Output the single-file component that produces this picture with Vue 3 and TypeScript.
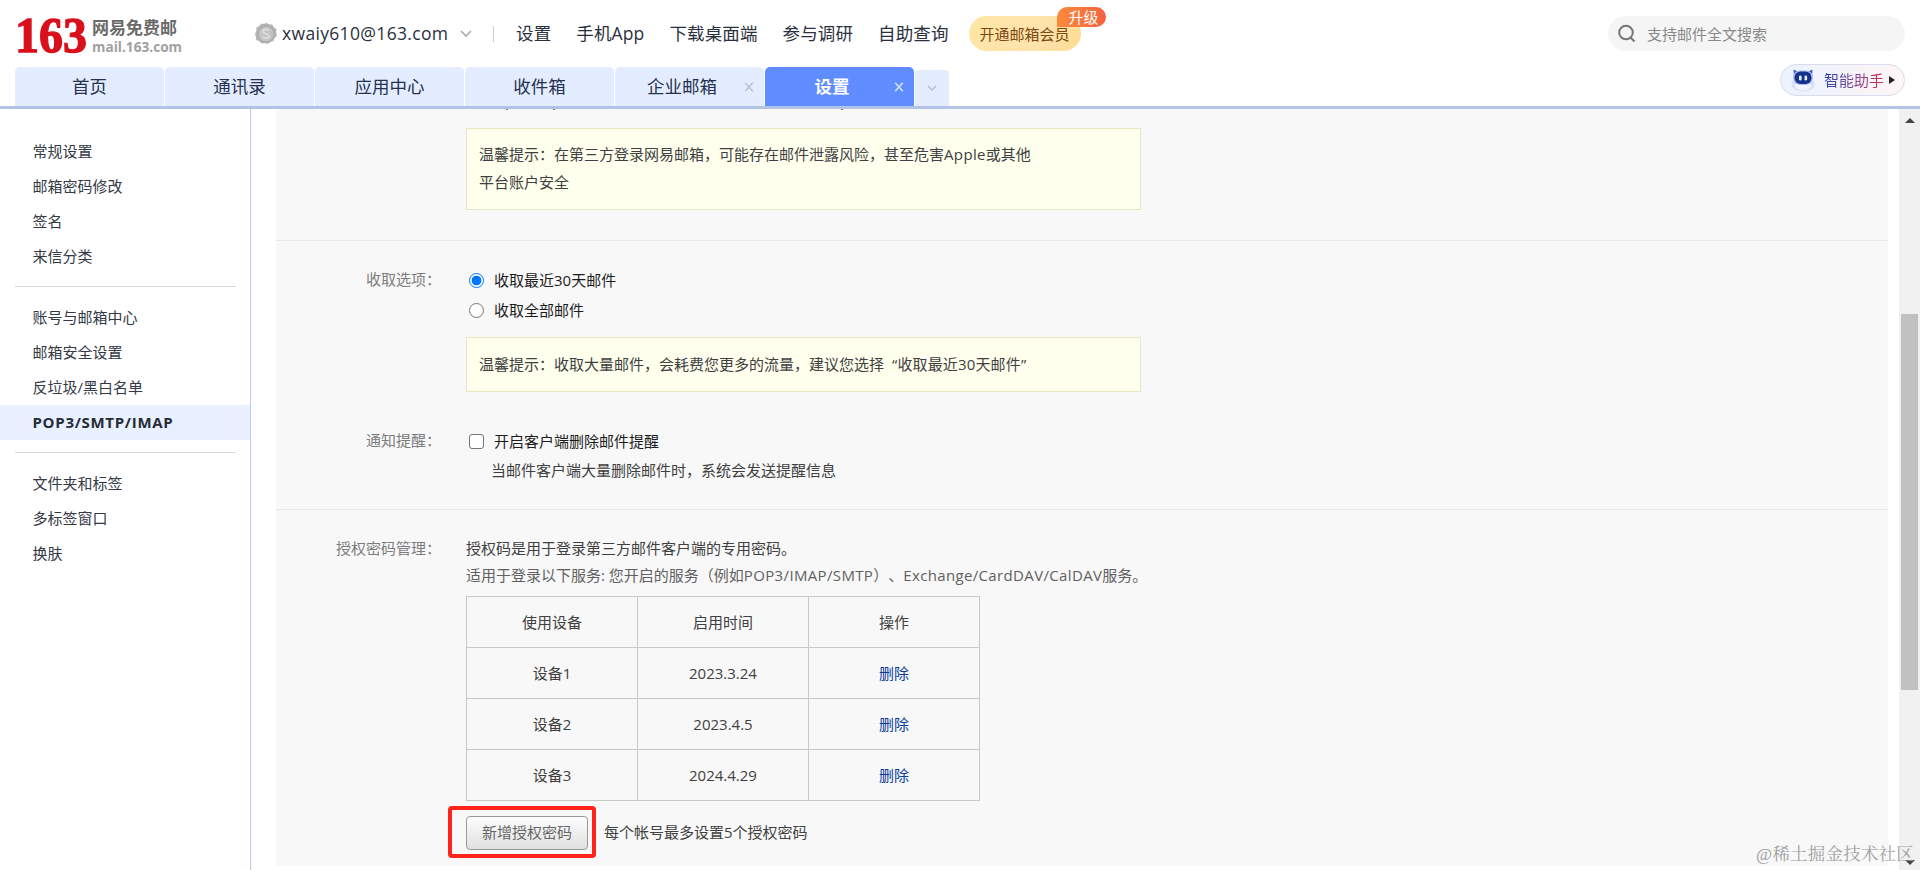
<script setup lang="ts">
interface Tab { label: string; closable?: boolean; active?: boolean }
interface Device { name: string; date: string }

const nav: string[] = ['设置', '手机App', '下载桌面端', '参与调研', '自助查询']
const tabs: Tab[] = [
  { label: '首页' },
  { label: '通讯录' },
  { label: '应用中心' },
  { label: '收件箱' },
  { label: '企业邮箱', closable: true },
  { label: '设置', closable: true, active: true },
]
const groups: string[][] = [
  ['常规设置', '邮箱密码修改', '签名', '来信分类'],
  ['账号与邮箱中心', '邮箱安全设置', '反垃圾/黑白名单', 'POP3/SMTP/IMAP'],
  ['文件夹和标签', '多标签窗口', '换肤'],
]
const current = 'POP3/SMTP/IMAP'
const devices: Device[] = [
  { name: '设备1', date: '2023.3.24' },
  { name: '设备2', date: '2023.4.5' },
  { name: '设备3', date: '2024.4.29' },
]
</script>

<template>
  <div class="page">
    <header class="top">
      <svg class="logo" width="172" height="54" viewBox="0 -10 172 54">
        <text class="logo-num" x="0" y="39" textLength="72" lengthAdjust="spacingAndGlyphs">163</text>
        <text class="logo-cn" x="77" y="21" textLength="85">网易免费邮</text>
        <text class="logo-en" x="77" y="39" textLength="90" lengthAdjust="spacingAndGlyphs">mail.163.com</text>
      </svg>
      <div class="account">
        <svg class="medal" width="24" height="24" viewBox="0 0 24 24">
          <path d="M12 .8l3 1.4 3.300.2 1.500 2.900 2.700 2-.4 3.200.9 3.200-2.400 2.300-1.100 3.100-3.200.8-2.500 2.100-3-1-3.200.6-2.200-2.400-3.100-1.200-.5-3.300L1 12l1.300-3.100.1-3.300 2.900-1.600L7.300 1.600l3.200.4z" fill="#b5b5b5" />
          <circle cx="12" cy="12" r="8" fill="#c4c4c4" stroke="#a5a5a5" />
          <path d="M15 8.500c-1.500-1.600-5.800-1.500-5.800 1 0 2.700 5.800 1.800 5.800 4.700 0 2.600-4.500 2.600-6.200.7" fill="none" stroke="#dedede" stroke-width="1.700" />
        </svg>
        <span class="mail">xwaiy610@163.com</span>
        <svg class="chev" width="12" height="8" viewBox="0 0 12 8"><path d="M1 1l5 5 5-5" fill="none" stroke="#aaa" stroke-width="1.600" /></svg>
      </div>
      <i class="sep"></i>
      <nav class="nav"><a v-for="n in nav" :key="n">{{ n }}</a></nav>
      <div class="vip">开通邮箱会员<span class="up">升级</span></div>
      <div class="search">
        <svg width="18" height="20" viewBox="0 0 18 20"><circle cx="8" cy="8.500" r="6.800" fill="none" stroke="#777" stroke-width="2" /><path d="M12.500 13.500l4 4" stroke="#777" stroke-width="2.200" /></svg>
        <span>支持邮件全文搜索</span>
      </div>
    </header>

    <div class="tabbar">
      <div v-for="t in tabs" :key="t.label" class="tab" :class="{ active: t.active, closable: t.closable }">
        {{ t.label }}
        <svg v-if="t.closable" class="x" width="10" height="10" viewBox="0 0 10 10"><path d="M1.200.8l7.600 8.400M8.800.8L1.200 9.200" stroke="currentColor" stroke-width="1.500" /></svg>
      </div>
      <div class="more"><svg width="10" height="7" viewBox="0 0 10 7"><path d="M1 1l4 4 4-4" fill="none" stroke="#b6bfd2" stroke-width="1.500" /></svg></div>
      <div class="assistant">
        <svg width="26" height="26" viewBox="0 0 26 26">
          <ellipse cx="13" cy="17.500" rx="11.500" ry="7" fill="#d8e0fb" />
          <ellipse cx="13" cy="18" rx="8" ry="5.500" fill="#f3f6ff" />
          <path d="M3.500 2.500l5 2.500-4.500 4zM22.500 2.500l-5 2.500 4.500 4z" fill="#3f57c8" />
          <rect x="3" y="3.500" width="20" height="14.500" rx="7.200" fill="#aebbf3" />
          <rect x="4.500" y="4.500" width="17" height="12.500" rx="6" fill="#17328c" />
          <rect x="9" y="8.500" width="2.600" height="5" rx="1.300" fill="#dff1ff" /><rect x="14.500" y="8.500" width="2.600" height="5" rx="1.300" fill="#dff1ff" />
        </svg>
        <span>智能助手</span><i></i>
      </div>
    </div>

    <div class="body">
      <aside class="side">
        <ul v-for="(g, i) in groups" :key="i">
          <li v-for="s in g" :key="s" :class="{ on: s === current }">{{ s }}</li>
        </ul>
      </aside>

      <main class="main">
        <section class="block first">
          <i class="tail t1"></i><i class="tail t2"></i><i class="tail t3"></i>
          <div class="tip">温馨提示：在第三方登录网易邮箱，可能存在邮件泄露风险，甚至危害<b>Apple</b>或其他<br />平台账户安全</div>
        </section>

        <section class="block receive">
          <div class="row">
            <div class="label">收取选项：</div>
            <div class="field">
              <div class="opt"><i class="radio sel"></i>收取最近30天邮件</div>
              <div class="opt"><i class="radio"></i>收取全部邮件</div>
              <div class="tip single">温馨提示：收取大量邮件，会耗费您更多的流量，建议您选择<span class="quoted">“收取最近30天邮件”</span></div>
            </div>
          </div>
          <div class="row notify">
            <div class="label">通知提醒：</div>
            <div class="field">
              <div class="opt"><i class="check"></i>开启客户端删除邮件提醒</div>
              <div class="note">当邮件客户端大量删除邮件时，系统会发送提醒信息</div>
            </div>
          </div>
        </section>

        <section class="block auth">
          <div class="row">
            <div class="label">授权密码管理：</div>
            <div class="field">
              <div class="desc">授权码是用于登录第三方邮件客户端的专用密码。</div>
              <div class="desc light">适用于登录以下服务: 您开启的服务（例如<b>POP3/IMAP/SMTP</b>）、<b>Exchange/CardDAV/CalDAV</b>服务。</div>
              <table>
                <thead><tr><th>使用设备</th><th>启用时间</th><th>操作</th></tr></thead>
                <tbody>
                  <tr v-for="d in devices" :key="d.name"><td>{{ d.name }}</td><td>{{ d.date }}</td><td><a>删除</a></td></tr>
                </tbody>
              </table>
              <div class="actions">
                <div class="btn-wrap"><button type="button">新增授权密码</button><span class="ring"></span></div>
                <span class="hint">每个帐号最多设置5个授权密码</span>
              </div>
            </div>
          </div>
        </section>
      </main>

      <div class="scroll"><i class="arrow up-arrow"></i><i class="thumb"></i><i class="arrow down-arrow"></i></div>
    </div>
    <div class="watermark">@稀土掘金技术社区</div>
  </div>
</template>

<style>
body { margin: 0; overflow: hidden; }
</style>

<style scoped>
* { box-sizing: border-box; }
.page { position: relative; width: 1920px; height: 870px; overflow: hidden; display: flex; flex-direction: column; background: #fff; color: #404040; font: 15px/28px "Open Sans", "Noto Sans CJK SC", sans-serif; white-space: nowrap; text-spacing-trim: space-all; }
.top { height: 67px; display: flex; flex: none; align-items: flex-start; padding: 16px 15px 0; font-size: 17.5px; line-height: 35px; color: #2b3040; }
.logo { display: block; flex: none; margin-top: -13px; }
.logo-num { font: bold 51px "Liberation Serif", serif; fill: #d9101c; stroke: #d9101c; stroke-width: 1.3px; }
.logo-cn { font: bold 17px "Noto Sans CJK SC", sans-serif; fill: #6a6a6a; }
.logo-en { font: bold 14px "Open Sans", sans-serif; fill: #a0a0a0; }
.account { width: 306px; padding-left: 67px; display: flex; align-items: center; height: 35px; }
.medal { margin-right: 4px; flex: none; }
.mail { width: 168px; letter-spacing: .33px; }
.chev { margin-left: 10px; }
.sep { width: 1px; height: 16px; margin-top: 10px; background: #ccc; }
.nav { display: flex; gap: 25px; margin-left: 22px; letter-spacing: .13px; }
.vip { position: relative; width: 112px; height: 35px; line-height: 36px; margin-left: 20px; border-radius: 18px; background: linear-gradient(110deg, #ffe6a4, #ffe3ad 60%, #fddc92); color: #7d4711; font-size: 15px; text-align: center; }
.up { position: absolute; left: 88px; top: -9px; width: 49px; height: 20px; padding-left: 5px; line-height: 20px; color: #fff; background: linear-gradient(90deg, #fb8b3c, #f4623f); border-radius: 10px 10px 10px 0; }
.search { margin-left: auto; width: 297px; height: 35px; line-height: 36px; border-radius: 18px; background: #f5f5f5; display: flex; align-items: center; padding-left: 10px; gap: 11px; color: #888; font-size: 15px; }
.tabbar { height: 42px; flex: none; display: flex; gap: 1px; padding-left: 15px; border-bottom: 3px solid #b2c3e5; align-items: flex-end; }
.tab { position: relative; width: 149px; height: 39px; line-height: 39px; text-align: center; font-size: 17.5px; color: #253150; background: #e4edff; border-radius: 5px 5px 0 0; }
.closable { padding-right: 15px; }
.active { background: #5f8dff; color: #fff; font-weight: bold; }
.x { position: absolute; right: 10px; top: 15px; color: #b7c1d8; }
.active .x { color: #dbe6ff; }
.more { width: 34px; height: 36px; background: #e4edff; border-radius: 4px 4px 0 0; display: flex; align-items: center; justify-content: center; }
.assistant { margin: 0 15px 10px auto; width: 125px; height: 32px; border: 1px solid #d9dcea; border-radius: 16px; background: linear-gradient(90deg, #eaf3ff, #fff5f5); display: flex; align-items: center; padding-left: 9px; }
.assistant span { margin-left: 8px; background: linear-gradient(90deg, #2b3fae, #7d4a9a 50%, #cf2e4c); background-clip: text; color: transparent; }
.assistant i { margin-left: 5px; border-left: 6px solid #222; border-top: 4px solid transparent; border-bottom: 4px solid transparent; }
.body { flex: 1; display: flex; min-height: 0; }
.side { width: 251px; border-right: 1px solid #bfcae6; padding-top: 25px; }
.side ul { list-style: none; margin: 0; padding: 0; }
.side ul:not(:last-child)::after { content: ''; display: block; height: 1px; margin: 12px 14px 13px 15px; background: #d6d9e0; }
.side li { height: 35px; line-height: 35px; padding-left: 32.5px; color: #343946; }
.side li.on { background: #e9f0ff; font-weight: bold; letter-spacing: .7px; color: #262b38; }
.main { margin-left: 25px; width: 1612px; height: 757px; background: #f8f8f8; overflow: hidden; }
.block { position: relative; border-bottom: 1px solid #e7e7e7; }
.block b { font-weight: normal; letter-spacing: .35px; }
.first { height: 132px; padding: 19px 0 0 190px; }
.tail { position: absolute; top: 0; width: 2px; height: 1px; background: #777; }
.t1 { left: 230px; } .t2 { left: 277px; } .t3 { left: 565px; }
.tip { width: 675px; height: 82px; padding: 11px 12px; border: 1px solid #e6e8c4; background: #ffffee; }
.single { height: 55px; margin-top: 12px; padding-top: 12px; }
.quoted { margin-left: 8px; letter-spacing: .15px; }
.receive { height: 269px; padding-top: 24px; }
.row { display: flex; }
.label { width: 165px; margin-right: 25px; text-align: right; color: #7c7c7c; }
.opt { height: 30px; line-height: 30px; color: #1c1c1c; display: flex; align-items: center; }
.radio, .check { width: 15px; height: 15px; margin: 0 10px 0 3px; border: 1px solid #767676; background: #fff; }
.radio { border-radius: 50%; }
.sel { border: 1.5px solid #0075ff; background: radial-gradient(circle, #0075ff 4.500px, #fff 5.200px); }
.check { border-radius: 3px; }
.notify { margin-top: 34px; }
.note { padding-left: 25px; line-height: 28px; }
.auth { border: 0; padding-top: 24px; }
.desc { height: 28px; line-height: 28px; }
.light { color: #606060; height: 34px; line-height: 26px; }
table { width: 514px; border-collapse: collapse; table-layout: fixed; }
th, td { height: 51px; padding: 0; border: 1px solid #c8c8c8; text-align: center; font-weight: normal; }
td a { color: #0a3d9c; }
.actions { display: flex; align-items: center; margin-top: 15px; gap: 16px; }
.hint { margin-top: -2px; }
.btn-wrap { position: relative; width: 122px; height: 34px; }
button { display: block; width: 122px; height: 34px; padding: 0 0 2px; border: 1px solid #999; border-radius: 4px; background: linear-gradient(#fdfdfd, #e0e0e0); color: #666; font: inherit; }
.ring { position: absolute; left: -18px; top: -10px; width: 148px; height: 52px; border: 4px solid #ff2419; border-radius: 4px; }
.scroll { margin-left: auto; width: 21px; background: #f1f1f1; display: flex; flex-direction: column; align-items: center; padding: 9px 0 5px; }
.thumb { width: 17px; height: 376px; background: #c1c1c1; margin-top: 191px; }
.arrow { border-left: 5px solid transparent; border-right: 5px solid transparent; }
.up-arrow { border-bottom: 5px solid #444; }
.down-arrow { margin-top: auto; border-top: 5px solid #444; }
.watermark { position: absolute; right: 6px; top: 840px; font-size: 17.5px; letter-spacing: .2px; color: #a0a0a0; font-family: "Liberation Serif", "Noto Serif CJK SC", "Noto Sans CJK SC", serif; }
</style>
